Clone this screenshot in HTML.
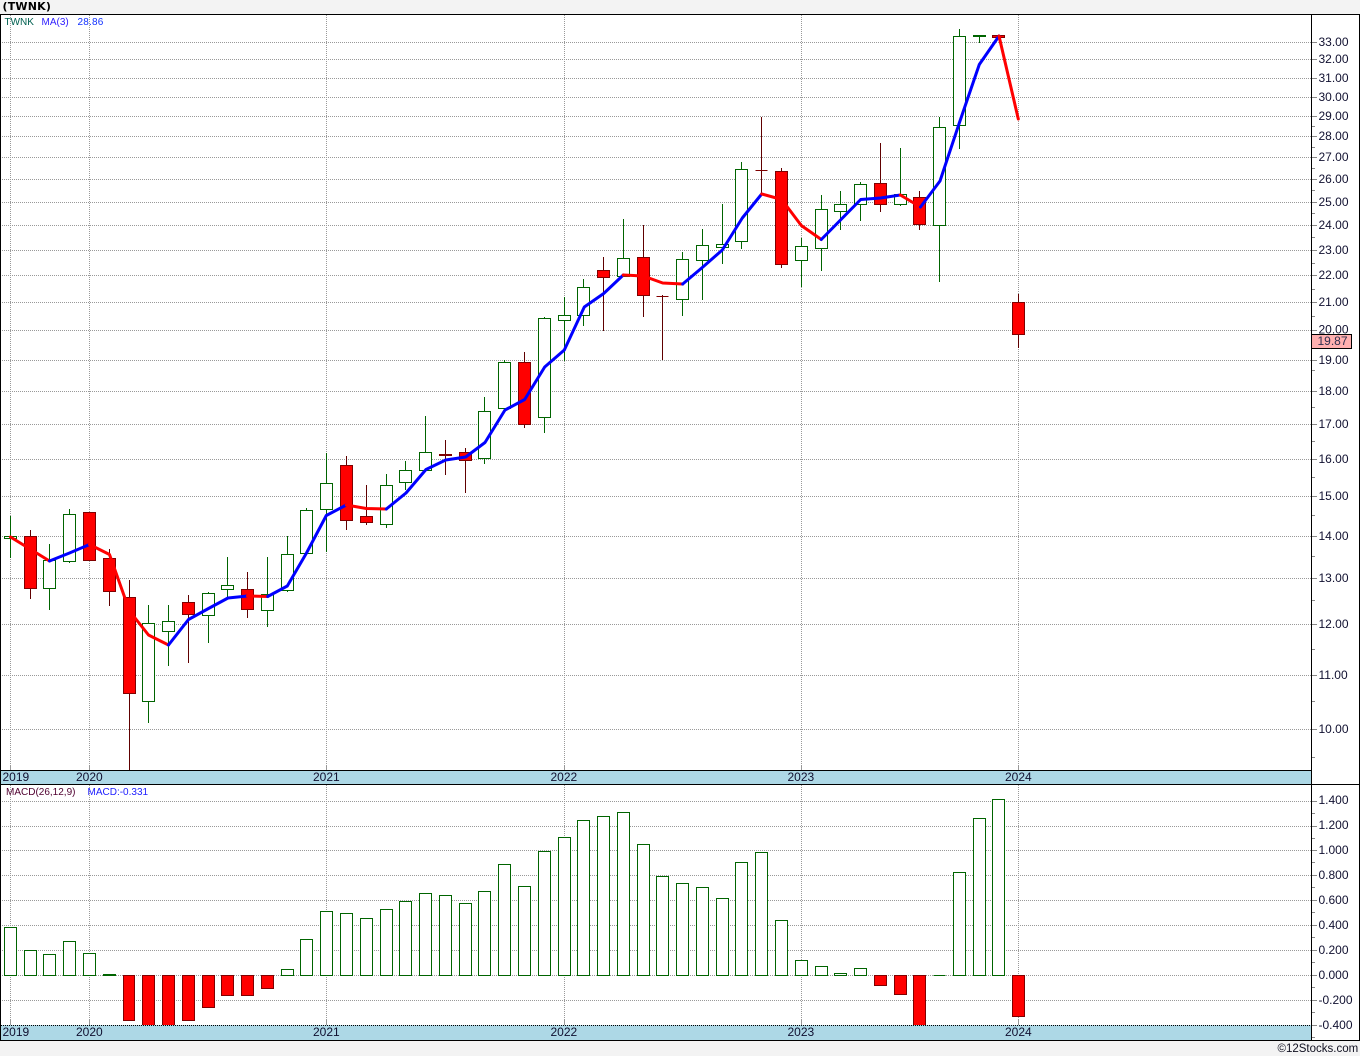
<!DOCTYPE html>
<html><head><meta charset="utf-8"><title>TWNK</title>
<style>
html,body{margin:0;padding:0;background:#f3f3f3}
svg{display:block}
text{font-family:"Liberation Sans",sans-serif;font-size:12px;fill:#101030}
.s{font-size:10px;letter-spacing:0}
</style></head>
<body>
<svg width="1360" height="1056" viewBox="0 0 1360 1056" xmlns="http://www.w3.org/2000/svg">
<rect width="1360" height="1056" fill="#f3f3f3"/>
<rect x="0" y="14" width="1360" height="1027" fill="#fff"/>
<text x="2.5" y="10" style="font-family:'DejaVu Sans',sans-serif;font-weight:bold;font-size:11px;letter-spacing:.2px;fill:#000">(TWNK)</text>

<g shape-rendering="crispEdges">
<!-- grid -->
<path fill="none" stroke="#999" stroke-dasharray="1 1" d="M2 42.5H1311M2 59.5H1311M2 78.5H1311M2 97.5H1311M2 116.5H1311M2 136.5H1311M2 157.5H1311M2 179.5H1311M2 202.5H1311M2 225.5H1311M2 250.5H1311M2 275.5H1311M2 302.5H1311M2 330.5H1311M2 360.5H1311M2 391.5H1311M2 424.5H1311M2 459.5H1311M2 496.5H1311M2 536.5H1311M2 578.5H1311M2 624.5H1311M2 675.5H1311M2 729.5H1311M2 801.5H1311M2 826.5H1311M2 850.5H1311M2 875.5H1311M2 900.5H1311M2 925.5H1311M2 950.5H1311M2 975.5H1311M2 1000.5H1311"/>
<path fill="none" stroke="#999" stroke-dasharray="1 1" d="M10.5 15V765M89.5 15V765M326.5 15V765M564.5 15V765M801.5 15V765M1018.5 15V765M10.5 785V1020M89.5 785V1020M326.5 785V1020M564.5 785V1020M801.5 785V1020M1018.5 785V1020"/>
<path fill="none" stroke="#999" d="M10.5 765V770M89.5 765V770M326.5 765V770M564.5 765V770M801.5 765V770M1018.5 765V770M10.5 1020V1025M89.5 1020V1025M326.5 1020V1025M564.5 1020V1025M801.5 1020V1025M1018.5 1020V1025"/>
<!-- axis ticks -->
<path fill="none" stroke="#888" d="M1312 42.5H1317M1312 59.5H1317M1312 78.5H1317M1312 97.5H1317M1312 116.5H1317M1312 136.5H1317M1312 157.5H1317M1312 179.5H1317M1312 202.5H1317M1312 225.5H1317M1312 250.5H1317M1312 275.5H1317M1312 302.5H1317M1312 330.5H1317M1312 360.5H1317M1312 391.5H1317M1312 424.5H1317M1312 459.5H1317M1312 496.5H1317M1312 536.5H1317M1312 578.5H1317M1312 624.5H1317M1312 675.5H1317M1312 729.5H1317M1312 801.5H1317M1312 826.5H1317M1312 850.5H1317M1312 875.5H1317M1312 900.5H1317M1312 925.5H1317M1312 950.5H1317M1312 975.5H1317M1312 1000.5H1317M1312 1025.5H1317"/>
<path fill="none" stroke="#888" d="M1312 126.5H1315M1312 147.5H1315M1312 168.5H1315M1312 190.5H1315M1312 213.5H1315M1312 237.5H1315M1312 263.5H1315M1312 289.5H1315M1312 316.5H1315M1312 370.5H1315M1312 407.5H1315M1312 441.5H1315M1312 477.5H1315M1312 515.5H1315M1312 556.5H1315M1312 600.5H1315M1312 649.5H1315M1312 701.5H1315M1312 757.5H1315M1312 813.5H1315M1312 838.5H1315M1312 862.5H1315M1312 887.5H1315M1312 912.5H1315M1312 937.5H1315M1312 962.5H1315M1312 987.5H1315M1312 1012.5H1315M1312 1037.5H1315"/>

<!-- wicks green -->
<path fill="none" stroke="#006400" d="M10.5 516V558M49.5 544V610M69.5 509V563M148.5 605V723M168.5 605V666M208.5 592V643M227.5 557V598M267.5 557V627M287.5 536V592M306.5 508V554M326.5 453V552M386.5 474V528M405.5 461V490M425.5 416V470M484.5 397V464M504.5 360V408M544.5 317V433M564.5 297V361M583.5 279V326M623.5 219V276M682.5 252V316M702.5 229V300M722.5 204V264M741.5 162V249M801.5 238V287M821.5 195V271M840.5 191V230M860.5 182V221M900.5 148V206M939.5 117V282M959.5 29V149M979.5 35V43"/>
<!-- wicks red -->
<path fill="none" stroke="#600000" d="M30.5 530V599M109.5 549V606M129.5 580V770M188.5 595V663M247.5 572V618M346.5 456V530M366.5 485V525M445.5 440V475M465.5 448V493M524.5 352V428M603.5 257V331M643.5 225V317M662.5 295V360M761.5 117V193M781.5 168V268M880.5 143V212M919.5 191V230M1018.5 294V348"/>
<!-- bodies green -->
<path fill="#fff" stroke="#006400" d="M4.5 536.5h12V538.5h-12zM43.5 560.5h12V588.5h-12zM63.5 514.5h12V561.5h-12zM142.5 623.5h12V701.5h-12zM162.5 621.5h12V631.5h-12zM202.5 593.5h12V615.5h-12zM221.5 585.5h12V589.5h-12zM261.5 594.5h12V610.5h-12zM281.5 554.5h12V590.5h-12zM300.5 510.5h12V553.5h-12zM320.5 483.5h12V509.5h-12zM380.5 485.5h12V524.5h-12zM399.5 470.5h12V482.5h-12zM419.5 452.5h12V470.5h-12zM478.5 411.5h12V458.5h-12zM498.5 362.5h12V408.5h-12zM538.5 318.5h12V417.5h-12zM558.5 315.5h12V320.5h-12zM577.5 287.5h12V315.5h-12zM617.5 258.5h12V276.5h-12zM676.5 259.5h12V299.5h-12zM696.5 245.5h12V260.5h-12zM716.5 244.5h12V247.5h-12zM735.5 169.5h12V241.5h-12zM795.5 246.5h12V260.5h-12zM815.5 209.5h12V248.5h-12zM834.5 204.5h12V211.5h-12zM854.5 184.5h12V204.5h-12zM894.5 194.5h12V204.5h-12zM933.5 127.5h12V225.5h-12zM953.5 36.5h12V125.5h-12zM973.5 35.5h12V36.5h-12z"/>
<!-- bodies red -->
<path fill="#f00" stroke="#800000" d="M24.5 536.5h12V588.5h-12zM83.5 512.5h12V560.5h-12zM103.5 558.5h12V591.5h-12zM123.5 597.5h12V693.5h-12zM182.5 602.5h12V614.5h-12zM241.5 589.5h12V609.5h-12zM340.5 465.5h12V520.5h-12zM360.5 516.5h12V522.5h-12zM439.5 454.5h12V455.5h-12zM459.5 452.5h12V460.5h-12zM518.5 362.5h12V424.5h-12zM597.5 270.5h12V277.5h-12zM637.5 257.5h12V295.5h-12zM656.5 296.5h12V296.5h-12zM755.5 170.5h12V170.5h-12zM775.5 171.5h12V264.5h-12zM874.5 183.5h12V204.5h-12zM913.5 197.5h12V224.5h-12zM992.5 35.5h12V37.5h-12zM1012.5 302.5h12V334.5h-12z"/>
</g>

<!-- MA(3) -->
<g fill="none" stroke-width="3" stroke-linejoin="round" stroke-linecap="round">
<polyline stroke="#f00" points="10.5,537 30,549 49.5,561"/>
<polyline stroke="#00f" points="49.5,561 69.5,553 89.5,544.5"/>
<polyline stroke="#f00" points="89.5,544.5 109.5,554.5 129.5,611 148.5,635 168.5,645"/>
<polyline stroke="#00f" points="168.5,645 188.5,619.5 208.5,608.5 228,598 247.5,596"/>
<polyline stroke="#f00" points="247.5,596 267.7,596.5"/>
<polyline stroke="#00f" points="267.7,596.5 287.3,586 306.5,553 326.3,515.5 346.3,505"/>
<polyline stroke="#f00" points="346.3,505 366.3,508.5 386.3,509"/>
<polyline stroke="#00f" points="386.3,509 406,493 426,469.5 445.7,460 465.7,457 485,442.5 505,410 524.7,399.5 544.7,367 564.3,350 584.3,307 603.7,293.5 623.3,275"/>
<polyline stroke="#f00" points="623.3,275 643.3,276 662.7,283 682.7,284"/>
<polyline stroke="#00f" points="682.7,284 702.3,267.5 722.3,250 742.3,218 761.7,194"/>
<polyline stroke="#f00" points="761.7,194 781.7,199.5 801.3,225.5 821.3,239.5"/>
<polyline stroke="#00f" points="821.3,239.5 841,219.5 860.7,199.5 880.7,198 900.3,195"/>
<polyline stroke="#f00" points="900.3,195 920.5,207"/>
<polyline stroke="#00f" points="920.5,207 940,181 959.3,123 979.3,64.5 999,36"/>
<polyline stroke="#f00" points="999,36 1018.3,119"/>
</g>

<!-- MACD bars -->
<g shape-rendering="crispEdges">
<path fill="#fff" stroke="#006400" d="M4.5 927.5h12V975.5h-12zM24.5 950.5h12V975.5h-12zM43.5 954.5h12V975.5h-12zM63.5 941.5h12V975.5h-12zM83.5 953.5h12V975.5h-12zM103.5 974.5h12V975.5h-12zM281.5 969.5h12V975.5h-12zM300.5 939.5h12V975.5h-12zM320.5 911.5h12V975.5h-12zM340.5 913.5h12V975.5h-12zM360.5 918.5h12V975.5h-12zM380.5 909.5h12V975.5h-12zM399.5 901.5h12V975.5h-12zM419.5 893.5h12V975.5h-12zM439.5 895.5h12V975.5h-12zM459.5 903.5h12V975.5h-12zM478.5 891.5h12V975.5h-12zM498.5 864.5h12V975.5h-12zM518.5 886.5h12V975.5h-12zM538.5 851.5h12V975.5h-12zM558.5 837.5h12V975.5h-12zM577.5 820.5h12V975.5h-12zM597.5 816.5h12V975.5h-12zM617.5 812.5h12V975.5h-12zM637.5 844.5h12V975.5h-12zM656.5 876.5h12V975.5h-12zM676.5 883.5h12V975.5h-12zM696.5 887.5h12V975.5h-12zM716.5 898.5h12V975.5h-12zM735.5 862.5h12V975.5h-12zM755.5 852.5h12V975.5h-12zM775.5 920.5h12V975.5h-12zM795.5 960.5h12V975.5h-12zM815.5 966.5h12V975.5h-12zM834.5 973.5h12V975.5h-12zM854.5 968.5h12V975.5h-12zM933.5 975.5h12V975.5h-12zM953.5 872.5h12V975.5h-12zM973.5 818.5h12V975.5h-12zM992.5 799.5h12V975.5h-12z"/>
<path fill="#f00" stroke="#800000" d="M123.5 975.5h11V1020.5h-11zM142.5 975.5h12V1030h-12zM162.5 975.5h12V1030h-12zM182.5 975.5h12V1020.5h-12zM202.5 975.5h12V1007.5h-12zM221.5 975.5h12V995.5h-12zM241.5 975.5h12V995.5h-12zM261.5 975.5h12V988.5h-12zM874.5 975.5h12V985.5h-12zM894.5 975.5h12V994.5h-12zM913.5 975.5h12V1030h-12zM1012.5 975.5h12V1016.5h-12z"/>

<!-- bands and frame -->
<rect x="0" y="770" width="1311" height="14" fill="#add8e6"/>
<rect x="0" y="1025" width="1311" height="15" fill="#add8e6"/>
<path fill="none" stroke="#000" stroke-dasharray="1 1" d="M1 1025.5H1311"/>
<path fill="none" stroke="#000" d="M0 14.5H1360M0 770.5H1311M0 784.5H1360M0 1040.5H1360M0.5 14V1041M1311.5 14V1041M1359.5 14V1041"/>
<rect x="1311.5" y="334.5" width="40" height="14" fill="#ffb0b0" stroke="#000"/>
</g>

<!-- axis labels -->
<g>
<text x="1318.5" y="46">33.00</text>
<text x="1318.5" y="63">32.00</text>
<text x="1318.5" y="82">31.00</text>
<text x="1318.5" y="101">30.00</text>
<text x="1318.5" y="120">29.00</text>
<text x="1318.5" y="140">28.00</text>
<text x="1318.5" y="161">27.00</text>
<text x="1318.5" y="183">26.00</text>
<text x="1318.5" y="206">25.00</text>
<text x="1318.5" y="229">24.00</text>
<text x="1318.5" y="254">23.00</text>
<text x="1318.5" y="279">22.00</text>
<text x="1318.5" y="306">21.00</text>
<text x="1318.5" y="364">19.00</text>
<text x="1318.5" y="395">18.00</text>
<text x="1318.5" y="428">17.00</text>
<text x="1318.5" y="463">16.00</text>
<text x="1318.5" y="500">15.00</text>
<text x="1318.5" y="540">14.00</text>
<text x="1318.5" y="582">13.00</text>
<text x="1318.5" y="628">12.00</text>
<text x="1318.5" y="679">11.00</text>
<text x="1318.5" y="733">10.00</text>
<text x="1318.5" y="333.6">20.00</text>
<text x="1317.5" y="345" style="fill:#303050">19.87</text>
<text x="1318.5" y="804">1.400</text>
<text x="1318.5" y="829">1.200</text>
<text x="1318.5" y="854">1.000</text>
<text x="1318.5" y="879">0.800</text>
<text x="1318.5" y="904">0.600</text>
<text x="1318.5" y="929">0.400</text>
<text x="1318.5" y="954">0.200</text>
<text x="1318.5" y="979">0.000</text>
<text x="1318.5" y="1004">-0.200</text>
<text x="1318.5" y="1029">-0.400</text>

<text x="2.5" y="781">2019</text>
<text x="76" y="781">2020</text>
<text x="313" y="781">2021</text>
<text x="550.5" y="781">2022</text>
<text x="787.5" y="781">2023</text>
<text x="1005" y="781">2024</text>
<text x="2.5" y="1036">2019</text>
<text x="76" y="1036">2020</text>
<text x="313" y="1036">2021</text>
<text x="550.5" y="1036">2022</text>
<text x="787.5" y="1036">2023</text>
<text x="1005" y="1036">2024</text>

<text class="s" x="4.5" y="25" style="fill:#006050">TWNK</text>
<text class="s" x="41.5" y="25" style="fill:#3020ff">MA(3)</text>
<text class="s" x="77.5" y="25" style="fill:#1030ff;letter-spacing:.2px">28.86</text>
<text class="s" x="6" y="795" style="fill:#500030">MACD(26,12,9)</text>
<text class="s" x="87.5" y="795" style="fill:#2020ff">MACD:-0.331</text>
<text x="1277.5" y="1052" style="font-size:11.5px;fill:#101020">©12Stocks.com</text>
</g>
</svg>
</body></html>
